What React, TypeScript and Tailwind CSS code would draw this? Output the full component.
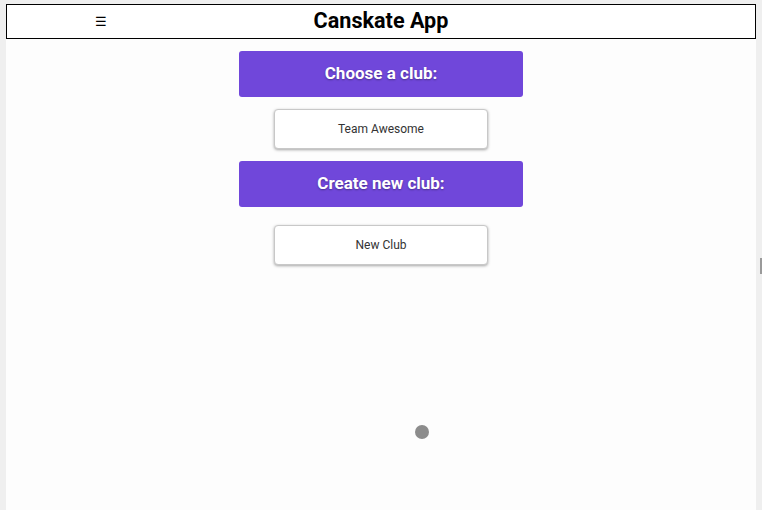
export default function App() {
  return (
    <div className="flex h-[510px] w-[762px] bg-[#efefef] pt-[4px] font-['Roboto',sans-serif]">
      <div className="relative mx-[6px] flex flex-1 flex-col bg-[#fdfdfd]">
        <header className="flex h-[35px] items-center border-[1.5px] border-black bg-white">
          <span className="ml-[88px] w-[14px] text-[13px] leading-none text-black">☰</span>
          <h1 className="flex-1 pr-[102px] text-center text-[21.6px] font-bold text-black">
            Canskate App
          </h1>
        </header>

        <main className="flex flex-col items-center pt-[12px]">
          <div className="flex h-[46px] w-[284px] items-center justify-center rounded-[3px] bg-[#7047da] text-[17px] font-bold text-white [text-shadow:0_1px_2px_rgba(0,0,0,0.35)]">
            Choose a club:
          </div>
          <button className="mt-[12px] h-[40px] w-[214px] rounded-[4px] border border-[#c8c8c8] bg-white text-[12px] text-[#333] shadow-[0_1px_3px_rgba(0,0,0,0.35)]">
            Team Awesome
          </button>
          <div className="mt-[12px] flex h-[46px] w-[284px] items-center justify-center rounded-[3px] bg-[#7047da] text-[17px] font-bold text-white [text-shadow:0_1px_2px_rgba(0,0,0,0.35)]">
            Create new club:
          </div>
          <button className="mt-[18px] h-[40px] w-[214px] rounded-[4px] border border-[#c8c8c8] bg-white text-[12px] text-[#333] shadow-[0_1px_3px_rgba(0,0,0,0.35)]">
            New Club
          </button>
        </main>

        <div className="absolute left-[409px] top-[421px] h-[14px] w-[14px] rounded-full bg-[#8c8c8c]" />
      </div>
      <div className="absolute right-0 top-[258px] h-[16px] w-[2px] bg-[#9a9a9a]" />
    </div>
  );
}
